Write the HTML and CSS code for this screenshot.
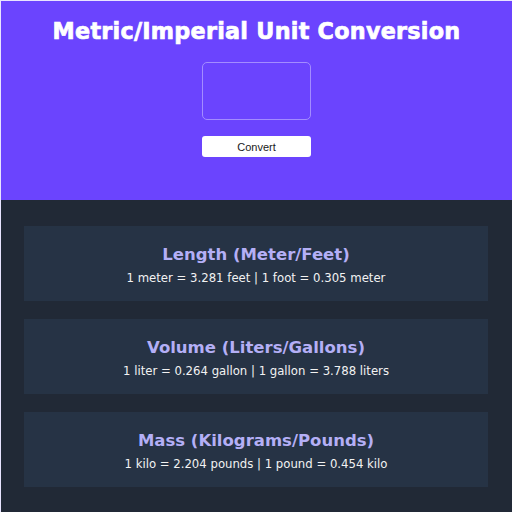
FILE: index.html
```html
<!DOCTYPE html>
<html>
<head>
<meta charset="utf-8">
<link rel="stylesheet" href="styles.css">
</head>
<body>
<header class="hero">
  <h1 class="title">Metric/Imperial Unit Conversion</h1>
  <input class="amount" type="text">
  <button class="convert">Convert</button>
</header>
<main class="results">
  <section class="card">
    <h2 class="card-title">Length (Meter/Feet)</h2>
    <p class="card-text">1 meter = 3.281 feet | 1 foot = 0.305 meter</p>
  </section>
  <section class="card">
    <h2 class="card-title">Volume (Liters/Gallons)</h2>
    <p class="card-text">1 liter = 0.264 gallon | 1 gallon = 3.788 liters</p>
  </section>
  <section class="card">
    <h2 class="card-title">Mass (Kilograms/Pounds)</h2>
    <p class="card-text">1 kilo = 2.204 pounds | 1 pound = 0.454 kilo</p>
  </section>
</main>
</body>
</html>
```

FILE: styles.css
```css
html, body {
  margin: 0;
  padding: 0;
}
body {
  background: #212936;
  font-family: "DejaVu Sans", sans-serif;
  border-top: 1px solid #e8e4ff;
  border-left: 1px solid #e8e4ff;
  min-height: 511px;
}
.hero {
  background: #6b44fe;
  height: 199px;
  display: flex;
  flex-direction: column;
  align-items: center;
  box-sizing: border-box;
  padding-top: 16px;
}
.title {
  margin: 0;
  color: #fff;
  font-family: "DejaVu Sans", sans-serif;
  font-weight: 800;
  font-size: 22.3px;
  line-height: 28px;
  letter-spacing: 0.25px;
  -webkit-text-stroke: 0.7px #fff;
}
.amount {
  margin-top: 17px;
  width: 109px;
  height: 58px;
  box-sizing: border-box;
  background: transparent;
  border: 1px solid #a38cff;
  border-radius: 5px;
  outline: none;
}
.convert {
  margin-top: 16px;
  width: 109px;
  height: 21px;
  box-sizing: border-box;
  background: #fff;
  border: none;
  border-radius: 3px;
  font-family: "Liberation Sans", Arial, sans-serif;
  font-size: 11px;
  color: #1a1a1a;
  padding: 0;
}
.results {
  display: flex;
  flex-direction: column;
  gap: 18px;
  padding: 26px 24px 24px 23px;
}
.card {
  background: #263345;
  height: 75px;
  box-sizing: border-box;
  display: flex;
  flex-direction: column;
  align-items: center;
  padding-top: 19px;
}
.card-title {
  margin: 0;
  color: #b4aff6;
  font-family: "DejaVu Sans", sans-serif;
  font-weight: 700;
  font-size: 16.5px;
  line-height: 20px;
}
.card-text {
  margin: 6px 0 0;
  color: #f2f2f2;
  font-family: "DejaVu Sans", sans-serif;
  font-size: 11.7px;
  line-height: 14px;
}
```
